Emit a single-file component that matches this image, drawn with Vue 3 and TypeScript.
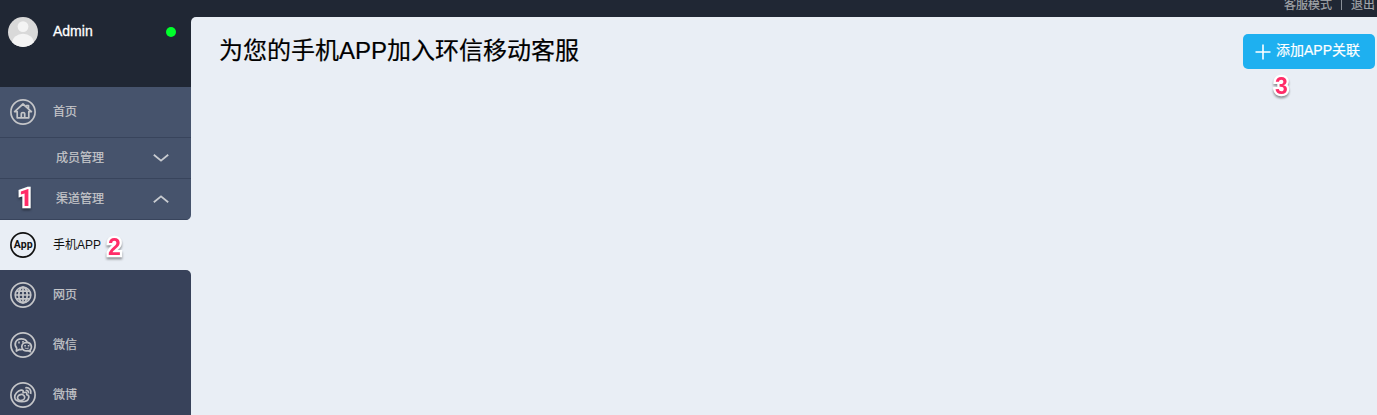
<script setup lang="ts">
interface Channel {
  id: string
  label: string
}

const channels: Channel[] = [
  { id: 'web', label: '网页' },
  { id: 'wechat', label: '微信' },
  { id: 'weibo', label: '微博' },
]
</script>

<template>
  <div class="page">
    <header class="topbar">
      <a>客服模式</a>
      <i class="divider"></i>
      <a>退出</a>
    </header>

    <aside class="sidebar">
      <div class="user">
        <svg class="avatar" viewBox="0 0 30 30">
          <defs>
            <clipPath id="avatar-clip"><circle cx="15" cy="15" r="15" /></clipPath>
          </defs>
          <g clip-path="url(#avatar-clip)">
            <rect width="30" height="30" fill="#d9d9d9" />
            <circle cx="15" cy="9.6" r="5.4" fill="#f4f4f4" />
            <ellipse cx="15" cy="26.5" rx="11" ry="9.8" fill="#f4f4f4" />
          </g>
        </svg>
        <span class="name">Admin</span>
        <i class="status"></i>
      </div>

      <nav class="menu">
        <div class="row home">
          <svg class="icon" viewBox="0 0 26 26">
            <circle cx="13" cy="13" r="12.1" />
            <path d="M4.6 12.6 13 5l8.4 7.6h-2.6v6.2H7.2v-6.2H4.6Z" />
            <path d="M16.6 7.6V6.6h1.9v3" />
            <path d="M11.3 18.8v-4.2q0-1 1.7-1t1.7 1v4.2" />
          </svg>
          <span>首页</span>
        </div>
        <div class="row group">
          <span>成员管理</span>
          <svg class="chevron" viewBox="0 0 16 8"><path d="M.8.8 8 6.7 15.2.8" /></svg>
        </div>
        <div class="row group last">
          <b class="marker one">1</b>
          <span>渠道管理</span>
          <svg class="chevron" viewBox="0 0 16 8"><path d="M.8 7.2 8 1.3l7.2 5.9" /></svg>
        </div>
      </nav>

      <div class="row active">
        <svg class="icon" viewBox="0 0 26 26">
          <circle cx="13" cy="13" r="12.1" />
          <text x="13.2" y="16.4" text-anchor="middle">App</text>
        </svg>
        <span>手机APP</span>
        <b class="marker two">2</b>
      </div>

      <nav class="channels">
        <div v-for="item in channels" :key="item.id" class="row">
          <svg class="icon" viewBox="0 0 26 26">
            <circle cx="13" cy="13" r="12.1" />
            <g v-if="item.id === 'web'">
              <circle cx="13" cy="13" r="7.8" />
              <ellipse cx="13" cy="13" rx="4.2" ry="7.8" />
              <path d="M13 5v16M5 13h16M6.2 9.2h13.6M6.2 16.8h13.6" />
            </g>
            <g v-else-if="item.id === 'wechat'">
              <path d="M13.2 17.2c-1.4.5-2.7.5-4 .2L6.4 19l.3-3C3.6 12.6 5.5 6.8 11.2 6.8c3.2 0 5.3 1.4 6 3.4" />
              <path d="M20 18.2c2.6-2.7 1.5-7.6-3.1-7.8-3.2 0-5.1 2-5.1 4.3 0 3.2 3.3 4.8 6.1 3.9l2.6 1.1Z" />
              <path class="dots" d="M9 9.5v2M13 9v1.8M15.1 13v1.6M18.6 13v1.6" />
              <path class="fine" d="M14.8 16q2 1 4 0" />
            </g>
            <g v-else>
              <path d="M11 8.1c-3.3.6-6.5 4-6.3 7 .2 6 13.2 6.3 14.1.2.2-1.7-.7-2.5-2.1-2.7.7-2.3-1.1-2.9-3.6-1.8.5-1.9-.2-3-2.1-2.7Z" />
              <ellipse cx="11.1" cy="15.5" rx="3.6" ry="3" transform="rotate(-12 11.1 15.5)" />
              <path d="M15.3 5.8c4-.7 6.5 2.5 5.4 6.1M15.6 8.5c2.2-.3 3.3 1 2.9 2.9" />
            </g>
          </svg>
          <span>{{ item.label }}</span>
        </div>
      </nav>
    </aside>

    <main class="content">
      <h1>为您的手机APP加入环信移动客服</h1>
      <div class="action">
        <button type="button">
          <svg class="plus" viewBox="0 0 16 16"><path d="M8 .5v15M.5 8h15" /></svg>
          <span>添加APP关联</span>
        </button>
        <b class="marker three">3</b>
      </div>
    </main>
  </div>
</template>

<style>
body {
  margin: 0;
}
</style>

<style scoped>
.page {
  width: 1377px;
  height: 415px;
  overflow: hidden;
  display: grid;
  grid-template: 17px 398px / 191px 1186px;
  background: #202734;
  font: 12px/18px "Liberation Sans", "Noto Sans CJK SC", sans-serif;
}
.topbar {
  grid-area: 1 / 2;
  display: flex;
  justify-content: flex-end;
  align-items: flex-start;
  padding-right: 2px;
  color: #a2a5aa;
}
.topbar a {
  margin-top: -4px;
  -webkit-text-stroke: 0.2px currentColor;
}
.divider {
  width: 1px;
  height: 11px;
  margin: -1px 9px 0;
  background: #8b9099;
}
.sidebar {
  grid-area: 1 / 1 / 3 / 2;
  display: flex;
  flex-direction: column;
  background: linear-gradient(#202734 0 87px, #e9eef5 87px);
}
.user {
  flex: none;
  height: 70px;
  padding: 17px 15px 0 8px;
  display: flex;
  align-items: flex-start;
}
.avatar {
  width: 30px;
  height: 30px;
}
.name {
  margin: 5px 0 0 15px;
  font-size: 14px;
  color: #fff;
  -webkit-text-stroke: 0.3px #fff;
}
.status {
  width: 10px;
  height: 10px;
  margin: 10px 0 0 auto;
  border-radius: 50%;
  background: #00ff2b;
}
.menu {
  border-radius: 0 0 5px 0;
  overflow: hidden;
  background: #46536c;
}
.row {
  box-sizing: border-box;
  height: 50px;
  padding: 0 10px;
  display: flex;
  align-items: center;
  color: #c6c7ca;
}
.row > span {
  margin: 0 0 0 17px;
  -webkit-text-stroke: 0.2px currentColor;
}
.home {
  height: 51px;
  border-bottom: 1px solid #38445c;
}
.group {
  height: 41px;
  padding: 0 22px 0 56px;
  border-bottom: 1px solid #38445c;
}
.group > span {
  margin: 0;
}
.icon {
  width: 26px;
  height: 26px;
  flex: none;
  fill: none;
  stroke: #c4c5c8;
  stroke-width: 1.7;
  stroke-linejoin: round;
}
.icon .dots {
  stroke-width: 1.6;
}
.icon .fine {
  stroke-width: 0.9;
}
.chevron {
  width: 16px;
  height: 8px;
  margin-left: auto;
  fill: none;
  stroke: #c8cbd0;
  stroke-width: 1.8;
}
.active {
  color: #111;
}
.active > span {
  -webkit-text-stroke: 0;
}
.active .icon {
  stroke: #111;
}
.active .icon text {
  font: 700 10.5px Roboto, sans-serif;
  letter-spacing: 0.1px;
  fill: #111;
  stroke: none;
}
.channels {
  height: 145px;
  overflow: hidden;
  border-radius: 0 5px 0 0;
  background: #38425a;
}
.content {
  grid-area: 2 / 2;
  display: flex;
  justify-content: space-between;
  align-items: flex-start;
  padding: 17px 2px 0 28px;
  border-radius: 5px 0 0 0;
  background: #e9eef5;
}
h1 {
  margin: 1px 0 0;
  font-size: 24px;
  line-height: 32px;
  font-weight: 400;
  color: #000;
  -webkit-text-stroke: 0.2px #000;
}
.action {
  position: relative;
}
button {
  width: 132px;
  height: 35px;
  padding: 0 0 0 12px;
  display: flex;
  align-items: center;
  gap: 5px;
  border: 0;
  border-radius: 5px;
  background: #1eb0f0;
  color: #fff;
  font: 14px/20px "Liberation Sans", "Noto Sans CJK SC", sans-serif;
  white-space: nowrap;
}
button span {
  margin-top: -3px;
  -webkit-text-stroke: 0.2px #fff;
}
.plus {
  width: 16px;
  height: 16px;
  flex: none;
  fill: none;
  stroke: #fff;
  stroke-width: 1.6;
}
.marker {
  position: absolute;
  font: bold 23px/24px "Liberation Sans", sans-serif;
  color: #ff2c68;
  -webkit-text-stroke: 4.5px #fff;
  paint-order: stroke fill;
  stroke-linejoin: round;
  filter: drop-shadow(0 2px 1px rgba(0, 0, 0, 0.4));
}
.marker::before {
  position: absolute;
  inset: 0;
}
.one {
  left: 19px;
  top: 187px;
  font-family: Roboto, sans-serif;
  font-weight: 900;
}
.two {
  left: 108px;
  top: 235px;
}
.three {
  left: 32px;
  top: 40px;
}
</style>
